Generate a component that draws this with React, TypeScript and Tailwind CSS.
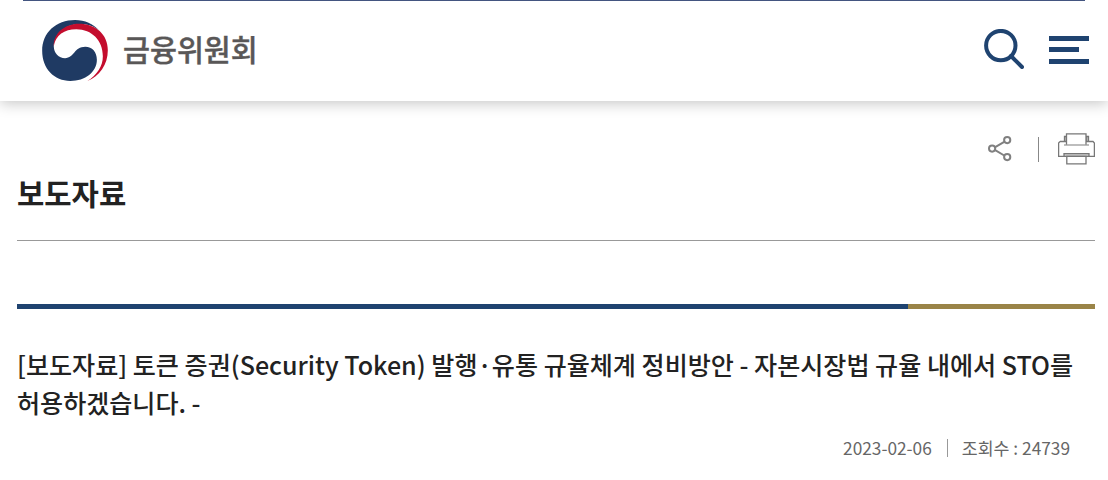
import React from "react";

/**
 * Government emblem
 */
function Emblem() {
  return (
    <svg viewBox="36 60 198 184" className="h-[61px] w-[66px]" aria-hidden="true">
      <path
        d="M207 91C190 72 165 60 135 60C78 60 36 98 36 153C36 207 72 244 121 244C166 244 201 217 201 180C201 157 187 141 166 141C132 141 133 175 105 175C86 175 71 160 71 139C73 104 105 74 146 72C172 71 192 78 207 91Z"
        fill="#1f3a63"
      />
      <path
        d="M71 139C69 99 106 71 146 71C198 71 234 103 234 151C234 194 209 229 172 244C202 225 219 199 219 169C219 122 186 88 139 88C103 88 76 106 71 139Z"
        fill="#c40d2e"
      />
    </svg>
  );
}

/**
 * Share icon
 */
function ShareIcon() {
  return (
    <svg
      viewBox="0 0 24 26"
      className="h-[26px] w-6"
      fill="none"
      stroke="#808080"
      strokeWidth="2"
    >
      <path d="M7.2 11.2 16.2 5.9M7.2 14.2 16.2 19.5" />
      <circle cx="4.1" cy="12.6" r="3.1" />
      <circle cx="19.2" cy="4.1" r="3.1" />
      <circle cx="19.2" cy="21.1" r="3.1" />
    </svg>
  );
}

/**
 * Printer icon
 */
function PrintIcon() {
  return (
    <svg
      viewBox="0 0 37 32"
      className="h-8 w-[37px]"
      fill="#fff"
      stroke="#777"
      strokeWidth="1.3"
    >
      <path d="M6.5 9V3.5H9V9ZM30.5 9V3.5H28V9Z" fill="#bbb" />
      <path d="M2 8.5H8.5M28 8.5H35L36.4 10V23.3H.6V10L2 8.5" />
      <path d="M8.5 12V.8H28V12" />
      <path d="M6 12H31" stroke="#999" />
      <path d="M6 23.3V20.7H31V23.3Z" fill="#ccc" />
      <path d="M8.8 23.3H28V30.8H8.8Z" />
    </svg>
  );
}

/**
 * Site header
 */
function Header() {
  return (
    <header className="flex h-[101px] flex-col bg-white shadow-[0_2px_14px_rgba(0,0,0,0.24)]">
      <div className="ml-[23px] h-px w-[1062px] shrink-0 bg-[#435580]" />
      <div className="flex items-start justify-between pr-[19px] pl-[42px]">
        <a href="#" className="mt-[19px] flex gap-[15px]">
          <Emblem />
          <span className="mt-2 text-[29.3px] leading-[40px] font-medium whitespace-nowrap text-[#595757] [-webkit-text-stroke:0.4px_#595757]">
            금융위원회
          </span>
        </a>
        <div className="mt-7 flex gap-[25px]">
          <button type="button" aria-label="검색">
            <svg
              viewBox="0 0 40 40"
              className="size-10"
              fill="none"
              stroke="#1f4370"
              strokeWidth="4"
            >
              <circle cx="16.8" cy="16.6" r="14.7" />
              <path d="M27 27 38 38" strokeLinecap="round" />
            </svg>
          </button>
          <button
            type="button"
            aria-label="메뉴"
            className="mt-[7px] flex flex-col"
          >
            <span className="h-[5px] w-10 bg-[#1f4370]" />
            <span className="mt-1.5 h-[5px] w-[30px] bg-[#1f4370]" />
            <span className="mt-[7px] h-[5px] w-10 bg-[#1f4370]" />
          </button>
        </div>
      </div>
    </header>
  );
}

export default function App() {
  return (
    <div className="h-[480px] overflow-hidden bg-white font-['Noto_Sans_CJK_KR',sans-serif] text-[#222]">
      <Header />

      <main className="pr-[13px] pl-[17px]">
        {/* Page tools */}
        <div className="flex h-[74px] items-start justify-end pt-8">
          <button type="button" aria-label="공유" className="mt-[3px]">
            <ShareIcon />
          </button>
          <span className="mt-1 mr-[19px] ml-[26px] h-[25px] w-px bg-[#888]" />
          <button type="button" aria-label="인쇄">
            <PrintIcon />
          </button>
        </div>

        <h1 className="h-[66px] border-b border-[#999] text-[29.7px] leading-[36px] font-bold">
          보도자료
        </h1>

        {/* Article */}
        <div className="mt-[63px] flex h-[5px]">
          <span className="w-[891px] bg-[#1f4370]" />
          <span className="flex-1 bg-[#9a8448]" />
        </div>
        <h2 className="mt-9 text-[25.08px] leading-[38px] font-medium whitespace-nowrap">
          [보도자료] 토큰 증권(Security Token) 발행·유통 규율체계 정비방안 - 자본시장법 규율 내에서 STO를
          <br />
          허용하겠습니다. -
        </h2>
        <div className="mt-3.5 flex items-center justify-end pr-[25px] text-[17.3px] leading-[26px] text-[#666]">
          <span>2023-02-06</span>
          <span className="mr-3.5 ml-[15px] h-[18px] w-px bg-[#999]" />
          <span>조회수 : 24739</span>
        </div>
      </main>
    </div>
  );
}
